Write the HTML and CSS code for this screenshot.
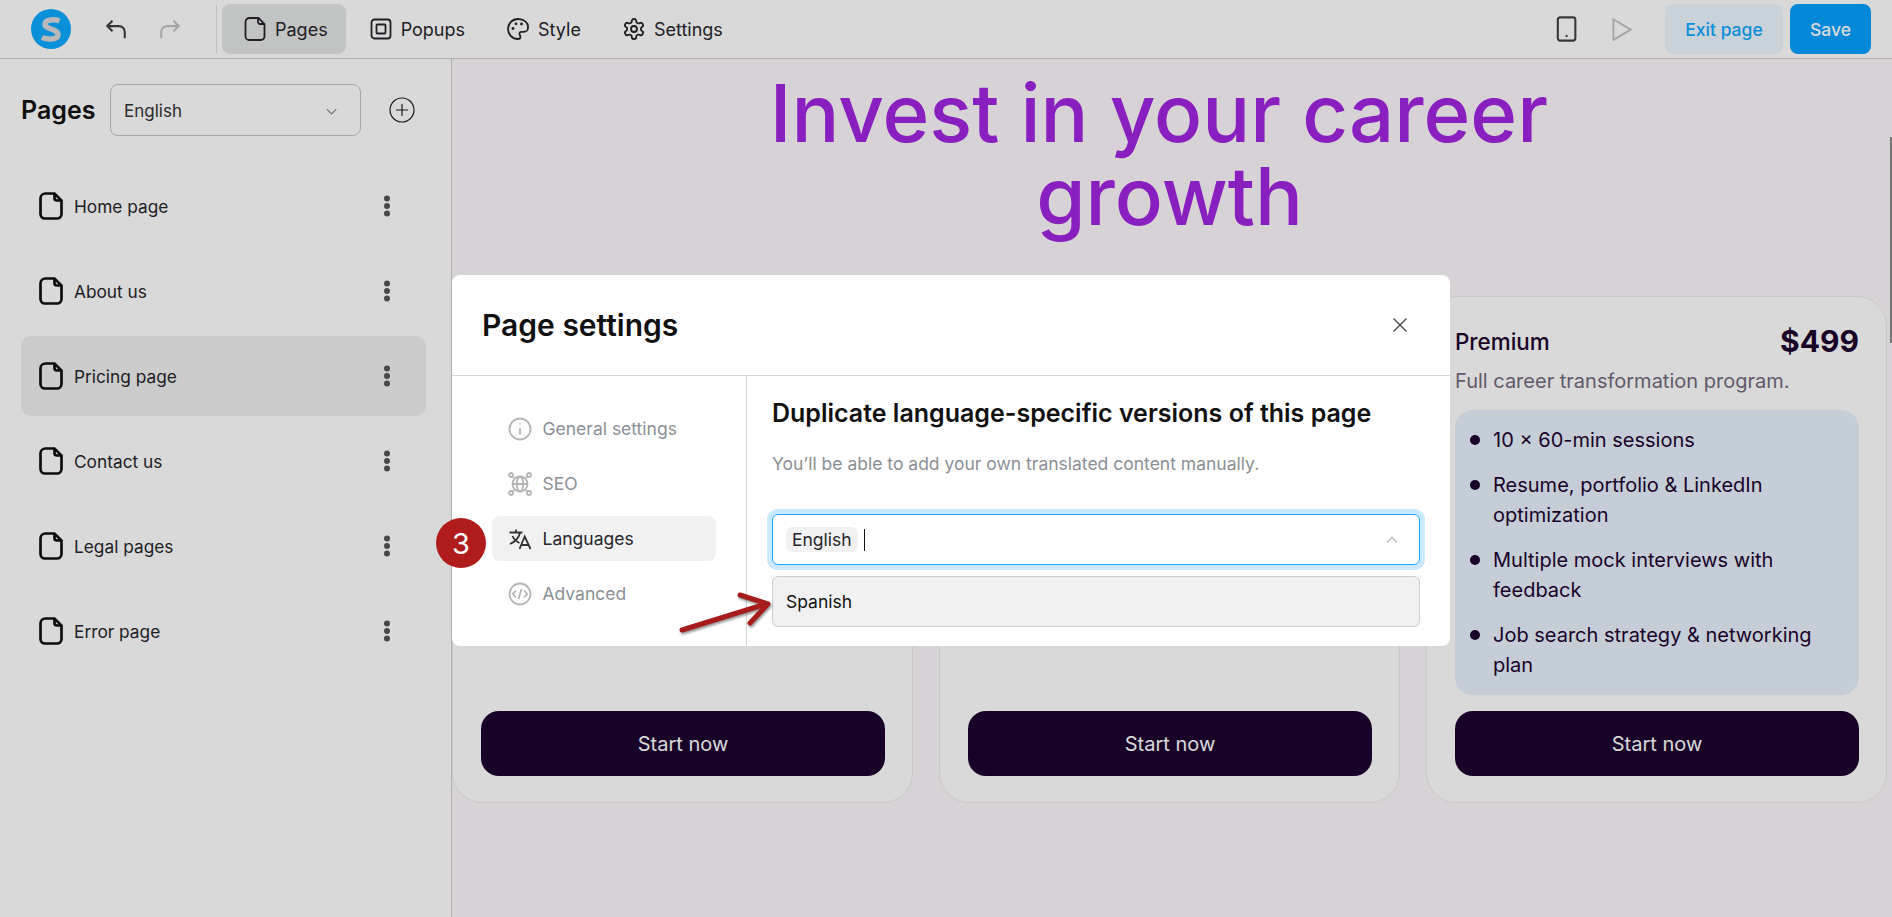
FILE: index.html
```html
<!DOCTYPE html>
<html lang="en">
<head>
    <meta charset="UTF-8">
    <title>Page settings</title>
    <link rel="stylesheet" href="styles.css">
</head>
<body>
<div class="app">
    <header class="topbar">
        <div class="brand">
            <svg class="logo" viewBox="0 0 40 40"><circle cx="20" cy="20" r="20" fill="#0ca8ff"/><path d="M28.500 12C24 10.300 14.500 10 14 15c-.5 5.500 13.500 4.500 13 11-.4 5-11 4.800-16 2.500" fill="none" stroke="#d9d9d9" stroke-width="5.500"/></svg>
            <svg class="hist" viewBox="0 0 24 24"><path d="M9 5 4.500 9.500 9 14M5 9.500h9.500a5 5 0 0 1 5 5V20"/></svg>
            <svg class="hist off" viewBox="0 0 24 24"><path d="M15 5l4.500 4.500L15 14M19 9.500H9.500a5 5 0 0 0-5 5V20"/></svg>
        </div>
        <nav class="tabs">
            <a class="tab on"><svg class="ic" viewBox="0 0 24 24"><path d="M6.500 1h9l6 6v12.500a3.500 3.500 0 0 1-3.500 3.500H6a3.500 3.500 0 0 1-3.500-3.500V5a4 4 0 0 1 4-4zM15 1.500V5a2 2 0 0 0 2 2h4"/></svg>Pages</a>
            <a class="tab"><svg class="ic" viewBox="0 0 24 24"><rect x="2.500" y="2.500" width="19" height="19" rx="3"/><rect x="7.500" y="7.500" width="9" height="9" rx="1"/></svg>Popups</a>
            <a class="tab"><svg class="ic" viewBox="0 0 24 24"><path d="M12 2a10 10 0 0 0 0 20c1.500 0 2.400-1 2.400-2.300 0-1.400-1-1.800-1-3 0-1 .8-1.800 2-1.800h2.400a4.200 4.200 0 0 0 4.200-4.200C22.500 5.500 17.800 2 12 2z"/><circle class="dot" cx="7" cy="11.500" r="1.400"/><circle class="dot" cx="10" cy="6.800" r="1.400"/><circle class="dot" cx="15.500" cy="7" r="1.400"/></svg>Style</a>
            <a class="tab"><svg class="ic" viewBox="0 0 24 24"><path d="M12.220 2h-.44a2 2 0 0 0-2 2v.18a2 2 0 0 1-1 1.730l-.43.250a2 2 0 0 1-2 0l-.15-.080a2 2 0 0 0-2.730.730l-.22.380a2 2 0 0 0 .730 2.730l.15.100a2 2 0 0 1 1 1.720v.510a2 2 0 0 1-1 1.740l-.15.090a2 2 0 0 0-.730 2.730l.22.380a2 2 0 0 0 2.730.730l.15-.080a2 2 0 0 1 2 0l.43.250a2 2 0 0 1 1 1.730V20a2 2 0 0 0 2 2h.44a2 2 0 0 0 2-2v-.18a2 2 0 0 1 1-1.730l.43-.25a2 2 0 0 1 2 0l.15.080a2 2 0 0 0 2.730-.730l.22-.39a2 2 0 0 0-.730-2.730l-.15-.080a2 2 0 0 1-1-1.740v-.5a2 2 0 0 1 1-1.740l.15-.090a2 2 0 0 0 .730-2.730l-.22-.38a2 2 0 0 0-2.730-.730l-.15.080a2 2 0 0 1-2 0l-.43-.25a2 2 0 0 1-1-1.730V4a2 2 0 0 0-2-2z"/><circle cx="12" cy="12" r="3"/></svg>Settings</a>
        </nav>
        <div class="actions">
            <svg class="device" viewBox="0 0 24 24"><rect x="5" y="2" width="15" height="20" rx="2"/><circle class="dot" cx="12.500" cy="18" r="1"/></svg>
            <svg class="play" viewBox="0 0 24 24"><path d="M5 3l16 9.500L5 22z" stroke-linejoin="round"/></svg>
            <button class="btn exit">Exit page</button>
            <button class="btn save">Save</button>
        </div>
    </header>

    <div class="main">
        <aside class="sidebar">
            <div class="side-head">
                <h2>Pages</h2>
                <div class="lang-select">English<svg viewBox="0 0 16 16"><path d="M3 5.500l5 5 5-5"/></svg></div>
                <svg class="add" viewBox="0 0 26 26"><circle cx="13" cy="13" r="12"/><path d="M13 7v12M7 13h12"/></svg>
            </div>
            <ul class="page-list">
                <li><svg class="ic" viewBox="0 0 24 28"><path d="M6.500 1.500h9l7 7V22a4.500 4.500 0 0 1-4.500 4.500H6A4.500 4.500 0 0 1 1.500 22V6.500a5 5 0 0 1 5-5zM15.500 2v4a2.500 2.500 0 0 0 2.500 2.500h4"/></svg>Home page<i class="dots"></i></li>
                <li><svg class="ic" viewBox="0 0 24 28"><path d="M6.500 1.500h9l7 7V22a4.500 4.500 0 0 1-4.500 4.500H6A4.500 4.500 0 0 1 1.500 22V6.500a5 5 0 0 1 5-5zM15.500 2v4a2.500 2.500 0 0 0 2.500 2.500h4"/></svg>About us<i class="dots"></i></li>
                <li class="on"><svg class="ic" viewBox="0 0 24 28"><path d="M6.500 1.500h9l7 7V22a4.500 4.500 0 0 1-4.500 4.500H6A4.500 4.500 0 0 1 1.500 22V6.500a5 5 0 0 1 5-5zM15.500 2v4a2.500 2.500 0 0 0 2.500 2.500h4"/></svg>Pricing page<i class="dots"></i></li>
                <li><svg class="ic" viewBox="0 0 24 28"><path d="M6.500 1.500h9l7 7V22a4.500 4.500 0 0 1-4.500 4.500H6A4.500 4.500 0 0 1 1.500 22V6.500a5 5 0 0 1 5-5zM15.500 2v4a2.500 2.500 0 0 0 2.500 2.500h4"/></svg>Contact us<i class="dots"></i></li>
                <li><svg class="ic" viewBox="0 0 24 28"><path d="M6.500 1.500h9l7 7V22a4.500 4.500 0 0 1-4.500 4.500H6A4.500 4.500 0 0 1 1.500 22V6.500a5 5 0 0 1 5-5zM15.500 2v4a2.500 2.500 0 0 0 2.500 2.500h4"/></svg>Legal pages<i class="dots"></i></li>
                <li><svg class="ic" viewBox="0 0 24 28"><path d="M6.500 1.500h9l7 7V22a4.500 4.500 0 0 1-4.500 4.500H6A4.500 4.500 0 0 1 1.500 22V6.500a5 5 0 0 1 5-5zM15.500 2v4a2.500 2.500 0 0 0 2.500 2.500h4"/></svg>Error page<i class="dots"></i></li>
            </ul>
        </aside>

        <section class="canvas">
            <h1>Invest in your career&nbsp;<br>growth</h1>
            <div class="cards">
                <div class="card"><a class="start">Start now</a></div>
                <div class="card"><a class="start">Start now</a></div>
                <div class="card">
                    <div class="card-head"><span class="plan">Premium</span><span class="price">$499</span></div>
                    <p class="blurb">Full career transformation program.</p>
                    <ul class="features">
                        <li>10 × 60-min sessions</li>
                        <li>Resume, portfolio &amp; LinkedIn optimization</li>
                        <li>Multiple mock interviews with feedback</li>
                        <li>Job search strategy &amp; networking plan</li>
                    </ul>
                    <a class="start">Start now</a>
                </div>
            </div>
            <div class="thumb"></div>
        </section>
    </div>
</div>

<div class="overlay"></div>

<div class="modal">
    <div class="modal-head">
        <h3>Page settings</h3>
        <svg class="close" viewBox="0 0 16 16"><path d="M1.500 1.500l13 13M14.500 1.500l-13 13"/></svg>
    </div>
    <div class="modal-body">
        <ul class="modal-nav">
            <li><svg viewBox="0 0 24 24"><circle cx="12" cy="12" r="10.500"/><path d="M12 11v6.500M12 6.500v1"/></svg>General settings</li>
            <li><svg viewBox="0 0 24 24"><circle cx="12" cy="12" r="7.500"/><ellipse cx="12" cy="12" rx="3.200" ry="7.500"/><path d="M4.500 12h15M4 4l2 2M20 4l-2 2M4 20l2-2M20 20l-2-2"/><circle cx="3" cy="3" r="2"/><circle cx="21" cy="3" r="2"/><circle cx="3" cy="21" r="2"/><circle cx="21" cy="21" r="2"/></svg>SEO</li>
            <li class="on"><svg viewBox="0 0 24 24"><path d="M1.500 5.500h13M8 2.500v3M12 5.500c-1 5-4.500 9-10 11.500M4.500 9c1.500 3.500 4 5.500 7 7M11.500 22l5.200-12.500L22.500 22M13.500 18h7"/></svg>Languages</li>
            <li><svg viewBox="0 0 24 24"><circle cx="12" cy="12" r="10.500"/><path d="M8 8.500L4.800 12 8 15.500M16 8.500l3.200 3.500-3.200 3.500M13.500 7l-3 10"/></svg>Advanced</li>
        </ul>
        <div class="modal-content">
            <h4>Duplicate language-specific versions of this page</h4>
            <p>You’ll be able to add your own translated content manually.</p>
            <div class="tag-input">
                <span class="chip">English</span><span class="caret"></span>
                <svg viewBox="0 0 16 16"><path d="M3 10.500l5-5 5 5"/></svg>
            </div>
            <div class="option">Spanish</div>
        </div>
    </div>
</div>

<div class="step">3</div>
<svg class="arrow" viewBox="0 0 96 44"><path d="M4 40 88 14M62 5l28 9-18 19"/></svg>
</body>
</html>
```

FILE: styles.css
```css
* {
    margin: 0;
    padding: 0;
    box-sizing: border-box;
    list-style: none;
}

html, body {
    height: 100%;
    overflow: hidden;
}

body {
    font-family: Inter, "Liberation Sans", sans-serif;
    color: #1a1a1f;
    background: #fff;
}

svg {
    fill: none;
    stroke: currentColor;
    flex: none;
}

.dot {
    fill: currentColor;
    stroke: none;
}

.app {
    height: 917px;
    display: flex;
    flex-direction: column;
}

/* top bar */
.topbar {
    height: 59px;
    flex: none;
    display: flex;
    align-items: center;
    border-bottom: 1px solid #cfcfcf;
    background: #fff;
}

.brand {
    width: 217px;
    height: 49px;
    display: flex;
    align-items: center;
    border-right: 1px solid #e3e3e3;
    padding-left: 31px;
}

.logo {
    width: 40px;
    height: 40px;
    stroke: none;
    margin-right: 31px;
}

.hist {
    width: 28px;
    height: 28px;
    margin-right: 26px;
    stroke-width: 1.800;
    color: #404040;
}

.hist.off {
    color: #c4c4c4;
}

.tabs {
    display: flex;
    margin-left: 5px;
    gap: 2px;
}

.tab {
    height: 50px;
    display: flex;
    align-items: center;
    gap: 8px;
    padding: 0 18px 0 21px;
    border-radius: 8px;
    font-size: 18px;
    color: #26262b;
}

.tab.on {
    background: #e4e5e6;
}

.tab .ic {
    width: 24px;
    height: 24px;
    stroke-width: 1.800;
}

.actions {
    margin-left: auto;
    display: flex;
    align-items: center;
    padding-right: 21px;
}

.device {
    width: 28px;
    height: 28px;
    stroke-width: 1.800;
    color: #444;
    margin-right: 28px;
}

.play {
    width: 26px;
    height: 26px;
    stroke-width: 1.800;
    color: #c4c4c4;
    margin-right: 31px;
}

.btn {
    height: 50px;
    border: 0;
    border-radius: 8px;
    font: 500 17.500px Inter, sans-serif;
}

.exit {
    width: 118px;
    background: #eef7ff;
    color: #0ca8ff;
    margin-right: 7px;
}

.save {
    width: 81px;
    background: #02a0ff;
    color: #fff;
}

/* sidebar */
.main {
    flex: 1;
    display: flex;
    min-height: 0;
}

.sidebar {
    width: 452px;
    flex: none;
    border-right: 1px solid #cfcfcf;
    padding: 25px 25px 0 21px;
    background: #fff;
}

.side-head {
    display: flex;
    align-items: center;
    height: 52px;
}

.side-head h2 {
    font-size: 25px;
    font-weight: 600;
    width: 89px;
    color: #111;
}

.lang-select {
    width: 251px;
    height: 52px;
    display: flex;
    align-items: center;
    justify-content: space-between;
    padding: 2px 21px 0 13px;
    border: 1px solid #c4c4c4;
    border-radius: 8px;
    font-size: 17px;
    color: #333;
}

.lang-select svg {
    width: 15px;
    height: 15px;
    color: #888;
    stroke-width: 1.300;
}

.add {
    width: 26px;
    height: 26px;
    margin-left: 28px;
    stroke-width: 1.200;
    color: #222;
}

.page-list {
    margin-top: 30px;
    display: flex;
    flex-direction: column;
    gap: 5px;
}

.page-list li {
    height: 80px;
    display: flex;
    align-items: center;
    padding: 0 36px 0 18px;
    border-radius: 10px;
    font-size: 17.300px;
    color: #26262b;
}

.page-list li.on {
    background: #f0f0f0;
}

.page-list .ic {
    width: 24px;
    height: 28px;
    stroke-width: 2.700;
    color: #111;
    margin-right: 11px;
}

.dots {
    margin-left: auto;
    width: 6px;
    height: 6px;
    border-radius: 50%;
    background: #555;
    box-shadow: 0 -7.500px 0 #555, 0 7.500px 0 #555;
}

/* page behind */
.canvas {
    flex: 1;
    min-width: 0;
    position: relative;
    background: #fdf7fc;
    padding: 13px 5px 0 0;
    overflow: hidden;
}

.canvas h1 {
    font-size: 79.700px;
    font-weight: 500;
    line-height: 83px;
    text-align: center;
    color: #a125e0;
}

.cards {
    margin-top: 58px;
    display: grid;
    grid-template-columns: repeat(3, 1fr);
    gap: 26px;
}

.card {
    height: 507px;
    display: flex;
    flex-direction: column;
    padding: 29px 27px 26px 28px;
    background: #fff;
    border: 1px solid #ececec;
    border-radius: 30px;
}

.card-head {
    display: flex;
    justify-content: space-between;
    align-items: center;
    height: 30px;
}

.plan {
    font-size: 22.400px;
    font-weight: 500;
    color: #1e0330;
}

.price {
    font-size: 30px;
    font-weight: 700;
    color: #1e0330;
}

.blurb {
    margin-top: 13px;
    font-size: 20px;
    color: #746a80;
}

.features {
    margin-top: 17px;
    padding: 15px 20px 15px 15px;
    background: #e8f2fc;
    border-radius: 18px;
    font-size: 20px;
    line-height: 30px;
    color: #1e0330;
}

.features li {
    display: flex;
    gap: 13px;
    margin-bottom: 15px;
}

.features li:before {
    content: "";
    flex: none;
    width: 10px;
    height: 10px;
    margin-top: 10px;
    border-radius: 50%;
    background: #1e0330;
}

.features li:last-child {
    margin-bottom: 0;
}

.start {
    margin-top: auto;
    height: 65px;
    display: flex;
    align-items: center;
    justify-content: center;
    background: #1e0330;
    border-radius: 18px;
    color: #fff;
    font-size: 20px;
}

.thumb {
    position: absolute;
    right: 0;
    top: 78px;
    width: 2px;
    height: 206px;
    background: #8a8a8a;
}

/* modal */
.overlay {
    position: absolute;
    inset: 0;
    background: rgba(0, 0, 0, .15);
}

.modal {
    position: absolute;
    left: 452px;
    top: 275px;
    width: 998px;
    height: 371px;
    background: #fff;
    border-radius: 8px;
    display: flex;
    flex-direction: column;
}

.modal-head {
    height: 101px;
    flex: none;
    display: flex;
    align-items: center;
    justify-content: space-between;
    padding: 0 42px 0 30px;
    border-bottom: 1px solid #d5d5d5;
}

.modal-head h3 {
    font-size: 30px;
    font-weight: 600;
    color: #111;
}

.close {
    width: 16px;
    height: 16px;
    stroke-width: 1.300;
    color: #444;
}

.modal-body {
    flex: 1;
    display: flex;
    min-height: 0;
}

.modal-nav {
    width: 295px;
    flex: none;
    border-right: 1px solid #d5d5d5;
    padding: 30px 30px 0 40px;
    display: flex;
    flex-direction: column;
    gap: 10px;
}

.modal-nav li {
    height: 45px;
    display: flex;
    align-items: center;
    gap: 10.500px;
    padding-left: 16px;
    border-radius: 8px;
    font-size: 17.500px;
    color: #8b8f94;
}

.modal-nav svg {
    width: 24px;
    height: 24px;
    color: #b5b5b5;
    stroke-width: 1.800;
}

.modal-nav li.on {
    background: #f1f1f1;
    color: #26262b;
}

.modal-nav li.on svg {
    color: #333;
    stroke-width: 1.800;
}

.modal-content {
    flex: 1;
    padding: 21px 30px 0 25px;
}

.modal-content h4 {
    font-size: 25px;
    font-weight: 600;
    line-height: 32px;
    color: #111;
}

.modal-content p {
    margin-top: 24px;
    font-size: 17.500px;
    line-height: 21px;
    color: #8b8f94;
}

.tag-input {
    margin-top: 40px;
    height: 51px;
    display: flex;
    align-items: center;
    padding: 0 19px 0 13px;
    border: 1px solid #1ba3f7;
    border-radius: 6px;
    box-shadow: 0 0 0 5px #c8e9ff;
}

.chip {
    height: 25px;
    padding: 0 6px;
    display: flex;
    align-items: center;
    background: #f1f1f1;
    border-radius: 6px;
    font-size: 17.500px;
    color: #26262b;
}

.caret {
    width: 1px;
    height: 22px;
    margin-left: 6px;
    background: #111;
}

.tag-input svg {
    margin-left: auto;
    width: 16px;
    height: 16px;
    color: #bbb;
    stroke-width: 1.300;
}

.option {
    margin-top: 11px;
    height: 51px;
    display: flex;
    align-items: center;
    padding-left: 13px;
    background: #f1f1f1;
    border: 1px solid #ccc;
    border-radius: 6px;
    font-size: 17.500px;
    color: #111;
}

/* annotations on top of the screenshot */
.step {
    position: absolute;
    left: 436px;
    top: 518px;
    width: 50px;
    height: 50px;
    display: flex;
    align-items: center;
    justify-content: center;
    background: #b01c1c;
    border-radius: 50%;
    color: #fff;
    font-size: 29px;
}

.arrow {
    position: absolute;
    left: 678px;
    top: 590px;
    width: 96px;
    height: 44px;
    color: #a71d1d;
    stroke-width: 5;
    stroke-linecap: round;
    stroke-linejoin: round;
    filter: drop-shadow(1px 2px 1px rgba(0, 0, 0, .4));
}
```
